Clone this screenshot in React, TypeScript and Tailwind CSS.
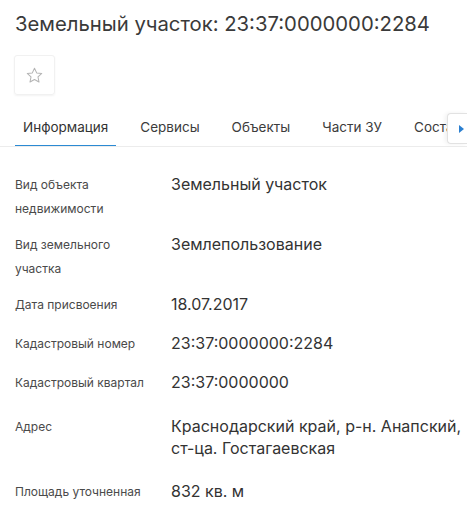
import React from "react";

// Rows of the information tab
const rows: { label: string[]; value: string[]; pad: string }[] = [
  { label: ["Вид объекта", "недвижимости"], value: ["Земельный участок"], pad: "py-[6px]" },
  { label: ["Вид земельного", "участка"], value: ["Землепользование"], pad: "py-[6px]" },
  { label: ["Дата присвоения"], value: ["18.07.2017"], pad: "py-[6px]" },
  { label: ["Кадастровый номер"], value: ["23:37:0000000:2284"], pad: "py-[6px]" },
  { label: ["Кадастровый квартал"], value: ["23:37:0000000"], pad: "py-[6px]" },
  {
    label: ["Адрес"],
    value: ["Краснодарский край, р-н. Анапский,", "ст-ца. Гостагаевская"],
    pad: "pt-[11px] pb-[15px]",
  },
  { label: ["Площадь уточненная"], value: ["832 кв. м"], pad: "py-[6px]" },
];

const tabs = ["Информация", "Сервисы", "Объекты", "Части ЗУ", "Состав"];

function StarIcon() {
  return (
    <svg width="19" height="19" viewBox="0 0 24 24" fill="none">
      <path
        d="M12 2.8l2.75 5.9 6.45.75-4.8 4.4 1.3 6.35L12 17l-5.7 3.2 1.3-6.35-4.8-4.4 6.45-.75z"
        stroke="#b4b4b4"
        strokeWidth="1.3"
        strokeLinejoin="round"
      />
    </svg>
  );
}

export default function App() {
  return (
    <div className="w-[467px] h-[519px] overflow-hidden bg-white font-['Inter',sans-serif] text-[#333]">
      <h1 className="pl-[15px] pt-[10px] text-[20.3px] leading-[28px] text-[#3a3a3a] whitespace-nowrap">
        Земельный участок: 23:37:0000000:2284
      </h1>

      {/* favourite button */}
      <div className="mt-[17px] ml-[14px] w-[41px] h-[40px] flex items-center justify-center rounded-[3px] border border-[#f1f1f1] shadow-[0_1px_2px_rgba(0,0,0,0.05)]">
        <StarIcon />
      </div>

      {/* tabs */}
      <div className="relative mt-[18px] border-b border-[#ececec]">
        <div className="flex gap-4 pl-[15px] overflow-hidden whitespace-nowrap">
          {tabs.map((t, i) => (
            <div
              key={t}
              className={
                "px-2 pt-[4px] pb-[8px] -mb-px text-[13.5px] leading-[20px] border-b-2 " +
                (i === 0 ? "border-[#2b8ad3] text-[#333]" : "border-transparent text-[#3c3c3c]")
              }
            >
              {t}
            </div>
          ))}
        </div>
        <div className="absolute right-0 top-0 w-[20px] h-[31px] flex items-center justify-end pr-[3px] bg-white border border-r-0 border-[#e2e2e2] rounded-l-[4px] shadow-[-2px_0_4px_rgba(0,0,0,0.06)]">
          <div className="w-0 h-0 border-y-[4px] border-y-transparent border-l-[5px] border-l-[#2b7fd0]" />
        </div>
      </div>

      {/* info rows */}
      <div className="mt-[20px] pl-[15px]">
        {rows.map((r) => (
          <div key={r.label.join(" ")} className={"flex min-h-[39px] " + r.pad}>
            <div className="w-[156px] shrink-0 text-[12px] leading-[24px] text-[#4a4a4a]">
              {r.label.map((l) => (
                <div key={l}>{l}</div>
              ))}
            </div>
            <div className="text-[16px] leading-[22px] text-[#333]">
              {r.value.map((v) => (
                <div key={v}>{v}</div>
              ))}
            </div>
          </div>
        ))}
      </div>
    </div>
  );
}
